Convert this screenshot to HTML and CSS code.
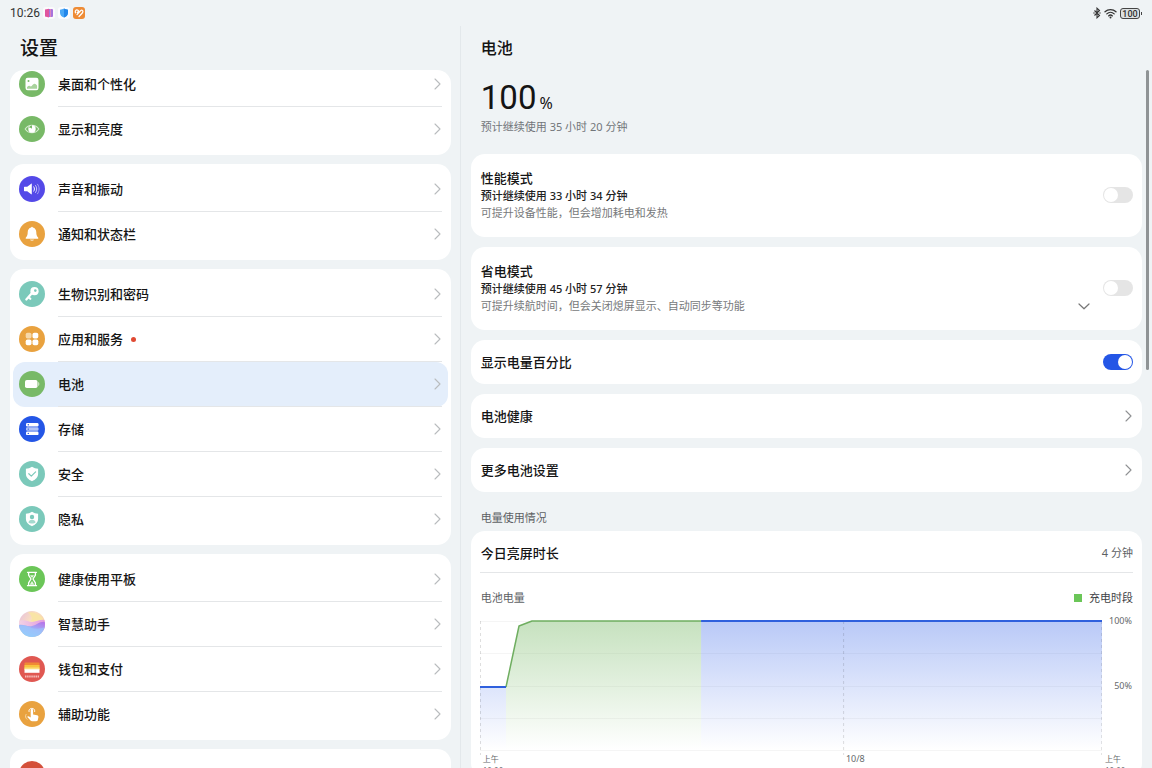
FILE: index.html
```html
<!DOCTYPE html>
<html lang="zh-CN">
<head>
<meta charset="utf-8">
<meta name="viewport" content="width=device-width, initial-scale=1">
<title>设置 - 电池</title>
<link rel="stylesheet" href="styles.css">
</head>
<body>
<svg class="defs" aria-hidden="true">
  <symbol id="chevron" viewBox="0 0 7 12"><path d="M1 1l5 5-5 5" fill="none" stroke="currentColor" stroke-width="1.1" stroke-linecap="round" stroke-linejoin="round"/></symbol>
</svg>

<header class="status">
  <div class="status-group">
    <time class="clock">10:26</time>
    <svg class="app" viewBox="0 0 12 12"><rect width="12" height="12" rx="3" fill="#fbfafc"/><path d="M2 2.600l4-.8v8.600l-4-.8z" fill="#e0559f"/><path d="M6 2h3a1 1 0 0 1 1 1v6a1 1 0 0 1-1 1H6z" fill="#a873dc"/><path d="M7.500 2v8" stroke="#e98bb8" stroke-width=".8"/></svg>
    <svg class="app" viewBox="0 0 12 12"><rect width="12" height="12" rx="3" fill="#fbfcfe"/><path d="M6 1.600c1.400.8 2.600 1.100 4 1.100v3c0 2.300-1.500 3.900-4 4.900-2.500-1-4-2.600-4-4.900v-3c1.400 0 2.600-.3 4-1.100z" fill="#4aa8f6"/><path d="M6 1.600c1.400.8 2.600 1.100 4 1.100v3c0 2.300-1.500 3.900-4 4.900z" fill="#2387ea"/></svg>
    <svg class="app" viewBox="0 0 12 12"><rect width="12" height="12" rx="3" fill="#ee8b35"/><path d="M2.500 5.800c-.6-1.300 0-2.700 1.200-2.900.9-.1 1.600.4 2 1.200L4.200 5.600M4 7.600l3.700-4c.9-.9 2.200-.3 2.200 1 0 .7-.3 1.100-.8 1.700L6 9.500" fill="none" stroke="#fff" stroke-width="1.300" stroke-linecap="round" stroke-linejoin="round"/></svg>
  </div>
  <div class="status-group status-right">
    <svg class="bt" viewBox="0 0 8 12"><path d="M1.500 3.500l5 5L4 10.800V1.200l2.500 2.300-5 5" fill="none" stroke="#333" stroke-width="1.100"/><circle cx="1" cy="6" r=".7" fill="#333"/><circle cx="7" cy="6" r=".7" fill="#333"/></svg>
    <svg class="wifi" viewBox="0 0 13 11"><g fill="none" stroke="#333" stroke-width="1.300" stroke-linecap="round"><path d="M1 3.800c3.100-3 7.900-3 11 0M2.800 5.900c2.100-2 5.300-2 7.400 0M4.600 7.900c1.100-1 2.700-1 3.800 0"/></g><circle cx="6.500" cy="9.600" r="1" fill="#333"/></svg>
    <span class="battery">100</span>
  </div>
</header>

<div class="panes">
<nav class="side" aria-label="设置">
  <h1 class="side-title">设置</h1>
  <div class="list">
    <ul class="group">
      <li><a class="row" href="#desktop">
        <svg class="ico" viewBox="0 0 26 26"><circle cx="13" cy="13" r="13" fill="#78b967"/><rect x="6.500" y="6.800" width="13" height="12.500" rx="2.200" fill="#fff"/><circle cx="9.500" cy="10" r="1" fill="#78b967"/><path d="M8 17.800v-1.500c1.200-1.600 2.600-1.900 3.800-.7 1.500-.2 1.900-3 3.800-2.800 1.300.1 1.900 1 2.500 1.900v3.100z" fill="#a9d39d"/></svg>
        <span class="cell"><span class="label">桌面和个性化</span><svg class="chev"><use href="#chevron"/></svg></span></a></li>
      <li><a class="row" href="#display">
        <svg class="ico" viewBox="0 0 26 26"><circle cx="13" cy="13" r="13" fill="#78b967"/><path d="M6.200 13c3.300-5 10.300-5 13.600 0-3.300 5-10.300 5-13.600 0z" fill="none" stroke="#d6ebd0" stroke-width="1.100"/><circle cx="13" cy="13" r="3.700" fill="#fff"/><path d="M13 12.800v-3.500a3.300 3.300 0 0 0-3 2.800c.9-.6 1.900-.4 3 .7z" fill="#78b967"/></svg>
        <span class="cell"><span class="label">显示和亮度</span><svg class="chev"><use href="#chevron"/></svg></span></a></li>
    </ul>
    <ul class="group">
      <li><a class="row" href="#sound">
        <svg class="ico" viewBox="0 0 26 26"><circle cx="13" cy="13" r="13" fill="#5449e8"/><path d="M5.500 10.800h2.700l4-3.100c.3-.2.600 0 .6.300v10c0 .3-.3.500-.6.300l-4-3.100H5.500c-.3 0-.5-.2-.5-.5v-3.400c0-.3.200-.5.500-.5z" fill="#fff"/><g fill="none" stroke-linecap="round"><path d="M14.800 10.900c.9 1.300.9 2.900 0 4.200" stroke="#fff"/><path d="M16.600 9.500c1.500 2.200 1.500 4.800 0 7" stroke="#c9c5f8"/><path d="M18.500 8.200c2.200 3 2.200 6.600 0 9.600" stroke="#a9a3f3"/></g></svg>
        <span class="cell"><span class="label">声音和振动</span><svg class="chev"><use href="#chevron"/></svg></span></a></li>
      <li><a class="row" href="#notice">
        <svg class="ico" viewBox="0 0 26 26"><circle cx="13" cy="13" r="13" fill="#e9a23f"/><path d="M12.200 6.500a.8.800 0 0 1 1.600 0c2.200.5 3.500 2.300 3.500 4.700 0 2.600.5 3.900 1.800 5.200.5.600.2 1.300-.6 1.300h-11c-.8 0-1.100-.7-.6-1.300 1.300-1.300 1.800-2.600 1.800-5.200 0-2.400 1.300-4.200 3.500-4.700z" fill="#fff"/><path d="M10.900 18.600h4.200c-.3.900-1.100 1.400-2.100 1.400s-1.800-.5-2.100-1.400z" fill="#f8dfb8"/></svg>
        <span class="cell"><span class="label">通知和状态栏</span><svg class="chev"><use href="#chevron"/></svg></span></a></li>
    </ul>
    <ul class="group">
      <li><a class="row" href="#biometric">
        <svg class="ico" viewBox="0 0 26 26"><circle cx="13" cy="13" r="13" fill="#7bc9ba"/><circle cx="15.500" cy="10.200" r="4.100" fill="#fff"/><path d="M12.800 12.200l-5.500 6.300M9.500 16.200l1.800 1.600" stroke="#fff" stroke-width="2.200" stroke-linecap="round"/><circle cx="16.300" cy="9.600" r="1.300" fill="#7bc9ba"/></svg>
        <span class="cell"><span class="label">生物识别和密码</span><svg class="chev"><use href="#chevron"/></svg></span></a></li>
      <li><a class="row" href="#apps">
        <svg class="ico" viewBox="0 0 26 26"><circle cx="13" cy="13" r="13" fill="#e9a23f"/><rect x="6.700" y="6.700" width="5.800" height="5.800" rx="1.800" fill="#f6d8a9"/><g fill="#fff"><rect x="13.500" y="6.700" width="5.800" height="5.800" rx="1.800"/><rect x="6.700" y="13.500" width="5.800" height="5.800" rx="1.800"/><rect x="13.500" y="13.500" width="5.800" height="5.800" rx="1.800"/></g></svg>
        <span class="cell"><span class="label">应用和服务</span><span class="dot"></span><svg class="chev"><use href="#chevron"/></svg></span></a></li>
      <li><a class="row current" href="#battery" aria-current="page">
        <svg class="ico" viewBox="0 0 26 26"><circle cx="13" cy="13" r="13" fill="#78b967"/><rect x="6" y="9" width="12.500" height="8" rx="1.800" fill="#fff"/><path d="M19 11c1 .2 1.400.9 1.400 2s-.4 1.800-1.400 2z" fill="#c4e0bc"/></svg>
        <span class="cell"><span class="label">电池</span><svg class="chev"><use href="#chevron"/></svg></span></a></li>
      <li><a class="row" href="#storage">
        <svg class="ico" viewBox="0 0 26 26"><circle cx="13" cy="13" r="13" fill="#2456e6"/><rect x="7" y="7" width="12.500" height="3.500" rx="1.200" fill="#fff"/><rect x="7" y="11.300" width="12.500" height="3.500" rx="1.200" fill="#b3c5f7"/><rect x="7" y="15.600" width="12.500" height="3.500" rx="1.200" fill="#fff"/><g fill="#2456e6"><circle cx="9.300" cy="8.800" r=".7"/><circle cx="9.300" cy="13.100" r=".7"/><circle cx="9.300" cy="17.400" r=".7"/></g></svg>
        <span class="cell"><span class="label">存储</span><svg class="chev"><use href="#chevron"/></svg></span></a></li>
      <li><a class="row" href="#security">
        <svg class="ico" viewBox="0 0 26 26"><circle cx="13" cy="13" r="13" fill="#7bc9ba"/><path d="M13 5.800c1.900 1.300 3.900 1.900 6.100 2v5c0 3.500-2.500 6-6.100 7.400-3.600-1.400-6.100-3.900-6.100-7.400v-5c2.200-.1 4.200-.7 6.100-2z" fill="#fff"/><path d="M9.800 12.700l2.500 2.400 4.300-4.200" fill="none" stroke="#7bc9ba" stroke-width="1.200" stroke-linecap="round" stroke-linejoin="round"/></svg>
        <span class="cell"><span class="label">安全</span><svg class="chev"><use href="#chevron"/></svg></span></a></li>
      <li><a class="row" href="#privacy">
        <svg class="ico" viewBox="0 0 26 26"><circle cx="13" cy="13" r="13" fill="#7bc9ba"/><path d="M13 5.800c1.900 1.300 3.900 1.900 6.100 2v5c0 3.500-2.500 6-6.100 7.400-3.600-1.400-6.100-3.900-6.100-7.400v-5c2.200-.1 4.200-.7 6.100-2z" fill="#fff"/><circle cx="13" cy="11" r="2.200" fill="#7bc9ba"/><path d="M9.500 16.400c0-3.700 7-3.700 7 0-1.100 1.400-5.900 1.400-7 0z" fill="#a5dacf"/></svg>
        <span class="cell"><span class="label">隐私</span><svg class="chev"><use href="#chevron"/></svg></span></a></li>
    </ul>
    <ul class="group">
      <li><a class="row" href="#digital-balance">
        <svg class="ico" viewBox="0 0 26 26"><circle cx="13" cy="13" r="13" fill="#6bc658"/><g fill="none" stroke="#fff" stroke-width="1.300" stroke-linecap="round" stroke-linejoin="round"><path d="M8.500 6.300h9M8.500 19.700h9M9.600 6.500v2.700L12 13l-2.400 3.800v2.700M16.400 6.500v2.700L14 13l2.400 3.800v2.700"/></g><path d="M11 9.200h4L13 12zM13 15l2.300 3.700h-4.600z" fill="#e4f5e0"/></svg>
        <span class="cell"><span class="label">健康使用平板</span><svg class="chev"><use href="#chevron"/></svg></span></a></li>
      <li><a class="row" href="#assistant">
        <svg class="ico" viewBox="0 0 26 26"><defs><clipPath id="orb"><circle cx="13" cy="13" r="13"/></clipPath><linearGradient id="sky" x1="0" y1="0" x2="1" y2=".6"><stop offset="0" stop-color="#e6bfe0"/><stop offset=".5" stop-color="#fadfbf"/><stop offset="1" stop-color="#f6cfa8"/></linearGradient><linearGradient id="mid" x1="0" y1="0" x2="1" y2="0"><stop offset="0" stop-color="#f3d3e4"/><stop offset="1" stop-color="#e39be0"/></linearGradient><linearGradient id="sea" x1=".2" y1="1" x2=".8" y2="0"><stop offset="0" stop-color="#86d6fa"/><stop offset=".5" stop-color="#9db6f8"/><stop offset="1" stop-color="#b678ea"/></linearGradient></defs><g clip-path="url(#orb)"><path d="M0 0h26v26H0z" fill="url(#sky)"/><path d="M9 1c7 0 13 3 16 8-5 3-9 3-13 1 2-3 0-6-3-9z" fill="#f9e4a6"/><path d="M0 10c5-2 9 1 13 1s9-3 13-2v10H0z" fill="url(#mid)"/><path d="M0 14c5-1 8 2 13 1s8-5 13-4v15H0z" fill="url(#sea)"/><path d="M0 15c5-2 9 0 13 2 4 1 8 1 13-1v10H0z" fill="#9cc8fb" opacity=".6"/></g></svg>
        <span class="cell"><span class="label">智慧助手</span><svg class="chev"><use href="#chevron"/></svg></span></a></li>
      <li><a class="row" href="#wallet">
        <svg class="ico" viewBox="0 0 26 26"><circle cx="13" cy="13" r="13" fill="#e05852"/><rect x="5.500" y="6.500" width="15" height="8" rx="1" fill="#f08a35"/><path d="M5.500 9h15v5h-15z" fill="#f8c23f"/><path d="M5.500 11.500h15v2h-15z" fill="#fbe07d"/><path d="M5.500 13.200h15v3.600h-15z" fill="#fff"/><path d="M6 20.500h14" stroke="#f5bcb9" stroke-width="1.800" stroke-dasharray="1.500 .6"/></svg>
        <span class="cell"><span class="label">钱包和支付</span><svg class="chev"><use href="#chevron"/></svg></span></a></li>
      <li><a class="row" href="#accessibility">
        <svg class="ico" viewBox="0 0 26 26"><circle cx="13" cy="13" r="13" fill="#e9a23f"/><path d="M11.700 9.300c0-1.700 2.400-1.700 2.400 0v4.200l4 .8c1 .2 1.500 1 1.300 2l-.6 2.700c-.2.800-.7 1.200-1.500 1.200h-4.200c-.7 0-1.200-.3-1.600-.8l-3.400-3.600c.8-.9 1.700-.7 2.500-.1l1.100.8z" fill="#fff"/><g fill="none" stroke-linecap="round"><path d="M10 10.500c-1-4.300 6.700-4.300 5.700 0" stroke="#fff"/><path d="M7 13.500c-.9 1.800-.5 3.500 1 4.800" stroke="#f6d8a9"/></g></svg>
        <span class="cell"><span class="label">辅助功能</span><svg class="chev"><use href="#chevron"/></svg></span></a></li>
    </ul>
    <ul class="group">
      <li><a class="row" href="#account" aria-label="用户和帐户">
        <svg class="ico" viewBox="0 0 26 26"><circle cx="13" cy="13" r="13" fill="#d4503a"/></svg>
        <span class="cell"></span></a></li>
    </ul>
  </div>
</nav>

<main class="main">
  <h2 class="main-title">电池</h2>
  <section class="hero">
    <p class="level"><span class="num">100</span><span class="pct">%</span></p>
    <p class="note">预计继续使用 35 小时 20 分钟</p>
  </section>

  <div class="cards">
    <section class="card mode">
      <label class="desc" for="perf"><span class="name">性能模式</span><span class="est">预计继续使用 33 小时 34 分钟</span><span class="hint">可提升设备性能，但会增加耗电和发热</span></label>
      <input class="switch" type="checkbox" role="switch" id="perf">
    </section>
    <section class="card mode">
      <label class="desc" for="save"><span class="name">省电模式</span><span class="est">预计继续使用 45 小时 57 分钟</span><span class="hint">可提升续航时间，但会关闭熄屏显示、自动同步等功能</span></label>
      <button class="expand" type="button" aria-label="展开"><svg viewBox="0 0 12 7"><path d="M1 1l5 4.800L11 1" fill="none" stroke="#777" stroke-width="1.200" stroke-linecap="round" stroke-linejoin="round"/></svg></button>
      <input class="switch" type="checkbox" role="switch" id="save">
    </section>
    <section class="card line">
      <label class="name" for="percent">显示电量百分比</label>
      <input class="switch" type="checkbox" role="switch" id="percent" checked>
    </section>
    <a class="card line" href="#health"><span class="name">电池健康</span><svg class="chev dark"><use href="#chevron"/></svg></a>
    <a class="card line" href="#more"><span class="name">更多电池设置</span><svg class="chev dark"><use href="#chevron"/></svg></a>
  </div>

  <h3 class="section">电量使用情况</h3>
  <section class="card usage">
    <div class="usage-row"><span class="name">今日亮屏时长</span><span class="value">4 分钟</span></div>
    <div class="chart-head"><span class="value">电池电量</span><span class="legend">充电时段</span></div>
    <div class="chart">
      <svg class="plot" viewBox="0 0 622 136" preserveAspectRatio="none" role="img" aria-label="电池电量">
        <defs>
          <linearGradient id="green" gradientUnits="userSpaceOnUse" x1="0" y1="1" x2="0" y2="130"><stop offset="0" stop-color="#78b967" stop-opacity=".42"/><stop offset="1" stop-color="#78b967" stop-opacity="0"/></linearGradient>
          <linearGradient id="blue" gradientUnits="userSpaceOnUse" x1="0" y1="1" x2="0" y2="130"><stop offset="0" stop-color="#2456e6" stop-opacity=".32"/><stop offset="1" stop-color="#2456e6" stop-opacity="0"/></linearGradient>
        </defs>
        <path d="M0 1.500h622M0 33.500h622M0 66.500h622M0 98.500h622M0 130.500h622" stroke="#000" stroke-opacity=".04"/>
        <path d="M0 67h26v63H0zM221 1h401v129H221z" fill="url(#blue)"/>
        <path d="M26 67L39 6l13-5h169v129H26z" fill="url(#green)"/>
        <path d="M.5 1v134M363.500 1v134M621.500 1v134" stroke="#000" stroke-opacity=".13" stroke-dasharray="3 3"/>
        <g fill="none" stroke-width="2"><path d="M26 67L39 6l13-5h169" stroke="#6fae60" stroke-linejoin="round" stroke-width="1.500"/><path d="M0 67h26M221 1h401" stroke="#2f60dd"/></g>
      </svg>
      <div class="y-axis"><span>100%</span><span>50%</span></div>
      <div class="x-axis"><span>上午<br>10:00</span><span class="date">10/8</span><span>上午<br>10:00</span></div>
    </div>
  </section>
  <div class="scrollbar"></div>
</main>
</div>
</body>
</html>
```
FILE: styles.css
```css
* { box-sizing: border-box; }

body {
  margin: 0;
  height: 100vh;
  overflow: hidden;
  display: flex;
  flex-direction: column;
  background: #eff3f5;
  color: #141414;
  font: 13px/18px "Noto Sans", "Noto Sans CJK SC", sans-serif;
}

h1, h2, h3, p, ul { margin: 0; padding: 0; font-weight: 500; }
ul { list-style: none; }
a { color: inherit; text-decoration: none; }
svg { display: block; flex: none; }
.defs { position: absolute; width: 0; height: 0; }

.status {
  flex: none;
  height: 26px;
  padding: 0 10px;
  display: flex;
  align-items: center;
  justify-content: space-between;
  font-family: Roboto, sans-serif;
}
.status-group { display: flex; align-items: center; gap: 3px; }
.clock { font-size: 12px; color: #333; }
.app { width: 12px; height: 12px; }
.bt { width: 8px; height: 12px; }
.wifi { width: 13px; height: 11px; }
.battery {
  position: relative;
  width: 20px;
  height: 11px;
  margin: 0 2px 0 0;
  border: 1px solid #444;
  border-radius: 3px;
  background: #dde1e2;
  color: #333;
  font-size: 9px;
  font-weight: 500;
  line-height: 10px;
  text-align: center;
}
.battery::after {
  content: "";
  position: absolute;
  right: -3px;
  top: 3px;
  width: 1px;
  height: 3px;
  background: #444;
}

.panes { flex: 1; min-height: 0; display: grid; grid-template-columns: 2fr 3fr; }

.side {
  min-height: 0;
  padding: 0 9px 0 10px;
  border-right: 1px solid #e3e8eb;
  display: flex;
  flex-direction: column;
}
.side-title { padding: 0 10px; font-size: 19px; line-height: 44px; }
.list { flex: 1; min-height: 0; overflow: hidden; border-radius: 14px 14px 0 0; }
.group { margin-bottom: 9px; padding: 3px; background: #fff; border-radius: 14px; }
.group:first-child { margin-top: -11px; }
.row {
  height: 45px;
  padding: 0 6px;
  display: flex;
  align-items: center;
  gap: 13px;
  border-radius: 12px;
  font-weight: 500;
}
.row.current { background: #e4eefb; }
.ico { width: 26px; height: 26px; margin-bottom: 1px; }
.cell {
  flex: 1;
  height: 100%;
  padding-right: 1px;
  display: flex;
  align-items: center;
  border-bottom: 1px solid #e4e6e8;
}
li:last-child .cell { border-bottom-color: transparent; }
.chev { width: 7px; height: 12px; margin-left: auto; color: #b9bcbe; }
.chev.dark { color: #8f9193; }
.dot { width: 5px; height: 5px; margin-left: 8px; border-radius: 50%; background: #e04a33; }

.main { position: relative; min-width: 0; padding: 0 10px; }
.main-title { padding: 0 10px; font-size: 16px; line-height: 44px; }
.hero { padding: 8px 10px 18px; }
.level { height: 40px; display: flex; align-items: baseline; gap: 3px; line-height: 40px; }
.num { font-family: Roboto, sans-serif; font-size: 33px; font-weight: 400; }
.pct { font-size: 16px; font-weight: 400; }
.note { font-size: 11px; line-height: 18px; font-weight: 400; color: #72767a; }

.cards { display: flex; flex-direction: column; gap: 10px; }
.card { background: #fff; border-radius: 14px; }
.name { font-size: 13px; line-height: 18px; font-weight: 500; }
.mode { padding: 15px 9px 16px 10px; display: flex; align-items: center; gap: 13px; }
.desc { flex: 1; display: flex; flex-direction: column; font-size: 11px; line-height: 17px; }
.est { font-weight: 500; color: #222; }
.hint { color: #77797b; }
.expand { align-self: flex-end; padding: 4px 0; border: 0; background: none; }
.expand svg { width: 12px; height: 7px; }
.line { height: 44px; padding: 0 9px 0 10px; display: flex; align-items: center; justify-content: space-between; }
.line .chev { margin-right: 1px; }

.switch {
  appearance: none;
  flex: none;
  width: 30px;
  height: 16px;
  margin: 0;
  padding: 1px;
  display: flex;
  border-radius: 8px;
  background: #e5e5e5;
}
.switch::before { content: ""; width: 14px; height: 14px; border-radius: 50%; background: #fff; }
.switch:checked { justify-content: flex-end; background: #2456e6; }

.section { padding: 17px 10px 4px; font-size: 11px; line-height: 18px; font-weight: 400; color: #5d6164; }
.usage { padding: 0 9px; }
.usage-row {
  height: 42px;
  padding: 3px 0 0 1px;
  display: flex;
  align-items: center;
  justify-content: space-between;
  border-bottom: 1px solid #e4e6e8;
}
.value { font-size: 11px; color: #5d6164; }
.chart-head { height: 48px; padding: 2px 0 0 1px; display: flex; align-items: center; justify-content: space-between; font-size: 11px; }
.legend { display: flex; align-items: center; gap: 7px; color: #3f4346; }
.legend::before { content: ""; width: 8px; height: 8px; background: #6bc658; }
.chart { display: grid; grid-template-columns: 1fr 31px; color: #66696c; font-size: 9px; line-height: 12px; }
.plot { width: 100%; height: 136px; margin-top: -1px; }
.y-axis { display: flex; flex-direction: column; gap: 53px; margin-top: -6px; padding-right: 1px; text-align: right; }
.x-axis { grid-column: 1 / 3; display: grid; grid-template-columns: 363fr 259fr 31px; font-size: 8px; margin-top: -3px; }
.x-axis span { padding-left: 3px; }
.x-axis .date { font-size: 9px; }

.scrollbar {
  position: absolute;
  top: 44px;
  right: 3px;
  width: 3px;
  height: 300px;
  border-radius: 2px;
  background: #8f9395;
}
```
